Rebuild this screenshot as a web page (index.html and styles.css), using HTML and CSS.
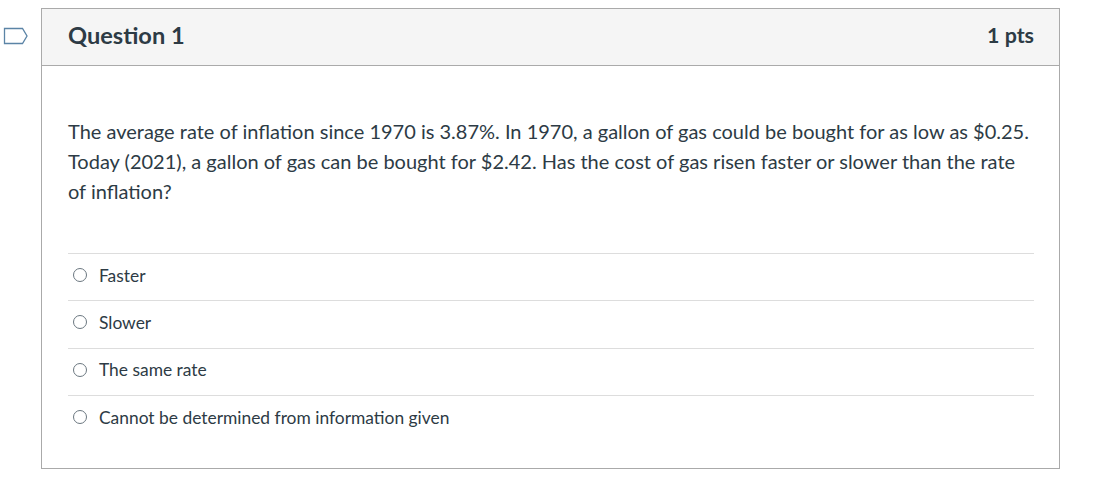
FILE: index.html
```html
<!DOCTYPE html>
<html>
<head>
<meta charset="utf-8">
<link rel="stylesheet" href="styles.css">
</head>
<body>
<div class="page">
  <div class="question">
    <svg class="flag" width="26" height="18" viewBox="0 0 26 18"><path d="M1.5 1.5 H19.5 L24 9 L19.5 16.5 H1.5 Z" fill="none" stroke="#5b84a6" stroke-width="1.3"/></svg>
    <div class="header">
      <div class="title">Question 1</div>
      <div class="pts">1 pts</div>
    </div>
    <div class="content">
      <p class="text">The average rate of inflation since 1970 is 3.87%. In 1970, a gallon of gas could be bought for as low as $0.25. Today (2021), a gallon of gas can be bought for $2.42. Has the cost of gas risen faster or slower than the rate of inflation?</p>
      <div class="answers">
        <div class="answer"><span class="radio"></span><span class="label">Faster</span></div>
        <div class="answer"><span class="radio"></span><span class="label">Slower</span></div>
        <div class="answer"><span class="radio"></span><span class="label">The same rate</span></div>
        <div class="answer"><span class="radio"></span><span class="label">Cannot be determined from information given</span></div>
      </div>
    </div>
  </div>
</div>
</body>
</html>
```

FILE: styles.css
```css
html, body {
  margin: 0;
  padding: 0;
  background: #fff;
}
body {
  font-family: Lato, "Liberation Sans", sans-serif;
  color: #2d3b45;
}
.page {
  padding: 8px 48px 0 41px;
}
.question {
  position: relative;
  border: 1px solid #aaaaaa;
  box-sizing: border-box;
  width: 1019px;
}
.flag {
  position: absolute;
  left: -39px;
  top: 18px;
}
.header {
  display: flex;
  justify-content: space-between;
  align-items: center;
  height: 57px;
  box-sizing: border-box;
  padding: 0 25px 4px 26px;
  background: #f5f5f5;
  border-bottom: 1px solid #aaaaaa;
}
.title {
  font-weight: 700;
  font-size: 23.6px;
  color: #2d3b45;
}
.pts {
  font-weight: 700;
  font-size: 21.4px;
  color: #2d3b45;
}
.content {
  padding: 50px 25px 26px 26px;
}
.text {
  margin: 0;
  font-size: 20px;
  line-height: 30px;
}
.answers {
  margin-top: 47px;
}
.answer {
  display: flex;
  align-items: center;
  height: 47.33px;
  box-sizing: border-box;
  padding-bottom: 4px;
  border-top: 1px solid #dddddd;
}
.radio {
  width: 14px;
  height: 14px;
  border: 1px solid #6b7780;
  border-radius: 50%;
  box-sizing: border-box;
  margin: 0 12px 0 5px;
}
.label {
  font-size: 17.4px;
  color: #2d3b45;
}
```
